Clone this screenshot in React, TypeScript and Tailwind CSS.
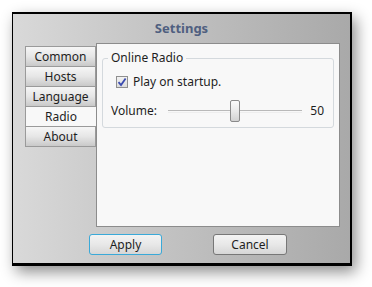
import { useState } from "react";

const tabs = ["Common", "Hosts", "Language", "Radio", "About"];

const App = () => {
  const [active, setActive] = useState("Radio");
  const [play, setPlay] = useState(true);
  const [volume] = useState(50);

  return (
    <div
      className="w-[372px] h-[287px] bg-white pt-[12px] pl-[12px] text-[12px] text-[#1e1e1e]"
      style={{ fontFamily: '"Noto Sans", "Open Sans", sans-serif' }}
    >
      <div className="w-[340px] h-[254px] border-t-2 border-l border-r-2 border-b-[3px] border-black bg-gradient-to-r from-[#d9d9d9] via-[#c0c0c0] to-[#a9a9a9] shadow-[4px_6px_14px_rgba(0,0,0,0.45)] flex flex-col">
        <div className="h-[29px] flex items-center justify-center font-bold text-[13px] text-[#4f5f80]">
          Settings
        </div>

        <div className="flex pl-[12px]">
          <div className="w-[71px] mt-[3px] flex flex-col">
            {tabs.map((t) => (
              <button
                key={t}
                onClick={() => setActive(t)}
                className={
                  active === t
                    ? "h-[21px] border border-r-0 border-[#9a9a9a] -mt-px first:mt-0 bg-[#f8f8f8] leading-none"
                    : "h-[21px] border border-[#9a9a9a] -mt-px first:mt-0 bg-gradient-to-b from-[#f6f6f6] via-[#e6e6e6] to-[#c9c9c9] leading-none"
                }
              >
                {t}
              </button>
            ))}
          </div>

          <div className="w-[244px] h-[184px] border border-[#8c8c8c] bg-[#f8f8f8] px-[5px] pt-[7px]">
            <fieldset className="border border-[#d4d9dd] rounded-[3px] px-[8px] pb-[5px]">
              <legend className="px-[3px] -ml-[3px] leading-[14px]">Online Radio</legend>
              <label className="flex items-center gap-[5px] ml-[5px] mt-[9px] h-[16px]">
                <span
                  onClick={() => setPlay(!play)}
                  className="w-[12px] h-[12px] border border-[#8f8f8f] bg-gradient-to-b from-[#f2f2f2] to-[#dcdcdc] flex items-center justify-center"
                >
                  {play && (
                    <svg width="10" height="10" viewBox="0 0 10 10">
                      <path d="M1.5 5.2 L4 8 L8.6 1.4" fill="none" stroke="#3a4bb0" strokeWidth="1.8" />
                    </svg>
                  )}
                </span>
                <span>Play on startup.</span>
              </label>
              <div className="flex items-center mt-[10px] h-[22px]">
                <span className="w-[57px]">Volume:</span>
                <div className="relative w-[134px] h-[22px] flex items-center">
                  <div className="w-full h-[3px] border-t border-[#b9b9b9] border-b border-b-[#eeeeee]" />
                  <div className="absolute left-[62px] top-0 w-[10px] h-[22px] rounded-[2px] border border-[#8a8a8a] bg-gradient-to-b from-[#fafafa] via-[#e9e9e9] to-[#d2d2d2]" />
                </div>
                <span className="ml-auto mr-[1px]">{volume}</span>
              </div>
            </fieldset>
          </div>
        </div>

        <div className="flex mt-[7px] pl-[76px]">
          <button className="w-[73px] h-[21px] rounded-[3px] border border-[#3aa9d8] bg-gradient-to-b from-[#f3f3f3] via-[#e8e8e8] to-[#d6d6d6]">
            Apply
          </button>
          <button className="ml-[51px] w-[74px] h-[21px] rounded-[3px] border border-[#777777] bg-gradient-to-b from-[#f3f3f3] via-[#e8e8e8] to-[#d6d6d6]">
            Cancel
          </button>
        </div>
      </div>
    </div>
  );
};

export default App;
